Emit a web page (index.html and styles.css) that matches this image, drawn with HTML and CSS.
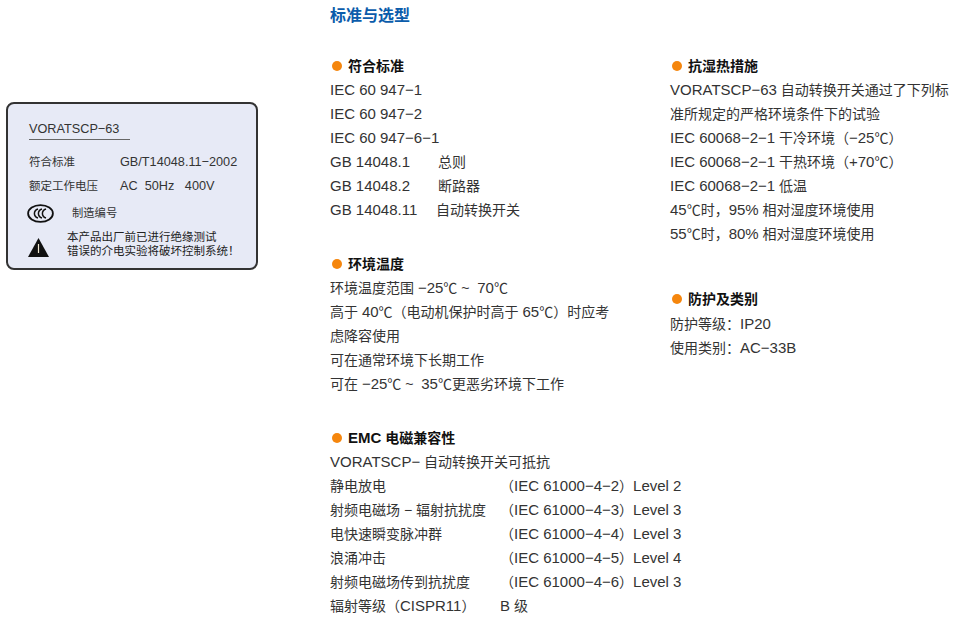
FILE: index.html
```html
<!DOCTYPE html>
<html lang="zh">
<head>
<meta charset="utf-8">
<title>标准与选型</title>
<link rel="stylesheet" href="styles.css">
</head>
<body>
<div class="page">
  <aside class="label">
    <div class="model">VORATSCP−63</div>
    <div class="spec"><span class="spec-name">符合标准</span><span class="lat">GB/T14048.11−2002</span></div>
    <div class="spec"><span class="spec-name">额定工作电压</span><span class="lat">AC&nbsp; 50Hz &nbsp;&nbsp;400V</span></div>
    <div class="serial">
      <svg class="ccc" viewBox="0 0 27 19" aria-hidden="true">
        <ellipse cx="13.5" cy="9.5" rx="12.4" ry="8.4" fill="none" stroke="#111" stroke-width="1.8"/>
        <path d="M11 5a5.5 4.8 0 0 0 0 9M15 5a5.5 4.8 0 0 0 0 9M19 5a5.5 4.8 0 0 0 0 9" fill="none" stroke="#111" stroke-width="1.5"/>
      </svg>
      <span>制造编号</span>
    </div>
    <div class="warning">
      <svg class="triangle" viewBox="0 0 21 19" aria-hidden="true">
        <path d="M10.5 0L21 19H0Z" fill="#111"/>
        <path d="M10.5 6v9" stroke="#f2e9d2" stroke-width="1.2"/>
      </svg>
      <p>本产品出厂前已进行绝缘测试<br>错误的介电实验将破坏控制系统！</p>
    </div>
  </aside>

  <main class="main">
    <div class="col-mid">
      <h1 class="title">标准与选型</h1>
      <section class="sec">
        <h2 class="head">符合标准</h2>
        <p class="en">IEC 60 947−1</p>
        <p class="en">IEC 60 947−2</p>
        <p class="en">IEC 60 947−6−1</p>
        <p><span class="std en">GB 14048.1</span>总则</p>
        <p><span class="std en">GB 14048.2</span>断路器</p>
        <p><span class="std std-long en">GB 14048.11</span>自动转换开关</p>
      </section>
      <section class="sec">
        <h2 class="head">环境温度</h2>
        <p>环境温度范围 <span class="en">−25</span>℃ ~ &nbsp;<span class="en">70</span>℃</p>
        <p>高于 <span class="en">40</span>℃（电动机保护时高于 <span class="en">65</span>℃）时应考</p>
        <p>虑降容使用</p>
        <p>可在通常环境下长期工作</p>
        <p>可在 <span class="en">−25</span>℃ ~ &nbsp;<span class="en">35</span>℃更恶劣环境下工作</p>
      </section>
      <section class="sec">
        <h2 class="head"><span class="en">EMC</span>&nbsp;电磁兼容性</h2>
        <p><span class="en">VORATSCP−</span> 自动转换开关可抵抗</p>
        <p><span class="emc">静电放电</span>（<span class="en">IEC 61000−4−2</span>）<span class="en">Level 2</span></p>
        <p><span class="emc">射频电磁场 − 辐射抗扰度</span>（<span class="en">IEC 61000−4−3</span>）<span class="en">Level 3</span></p>
        <p><span class="emc">电快速瞬变脉冲群</span>（<span class="en">IEC 61000−4−4</span>）<span class="en">Level 3</span></p>
        <p><span class="emc">浪涌冲击</span>（<span class="en">IEC 61000−4−5</span>）<span class="en">Level 4</span></p>
        <p><span class="emc">射频电磁场传到抗扰度</span>（<span class="en">IEC 61000−4−6</span>）<span class="en">Level 3</span></p>
        <p><span class="emc">辐射等级（<span class="en">CISPR11</span>）</span><span class="en">B</span> 级</p>
      </section>
    </div>
    <div class="col-right">
      <section class="sec">
        <h2 class="head">抗湿热措施</h2>
        <p><span class="en">VORATSCP−63</span> 自动转换开关通过了下列标</p>
        <p>准所规定的严格环境条件下的试验</p>
        <p><span class="en">IEC 60068−2−1</span> 干冷环境（<span class="en">−25</span>℃）</p>
        <p><span class="en">IEC 60068−2−1</span> 干热环境（<span class="en">+70</span>℃）</p>
        <p><span class="en">IEC 60068−2−1</span> 低温</p>
        <p><span class="en">45</span>℃时，<span class="en">95%</span> 相对湿度环境使用</p>
        <p><span class="en">55</span>℃时，<span class="en">80%</span> 相对湿度环境使用</p>
      </section>
      <section class="sec sec-protect">
        <h2 class="head head-tight">防护及类别</h2>
        <p>防护等级：<span class="en">IP20</span></p>
        <p>使用类别：<span class="en">AC−33B</span></p>
      </section>
    </div>
  </main>
</div>
</body>
</html>
```
FILE: styles.css
```css
* { box-sizing: border-box; }
html, body { margin: 0; padding: 0; background: #fff; }
body {
  font-family: "Liberation Sans", "Noto Sans CJK SC", sans-serif;
  font-size: 14px;
  line-height: 24px;
  color: #333;
}
p, h1, h2 { margin: 0; }
.page { display: flex; align-items: flex-start; padding: 3px 0 0 6px; height: 626px; overflow: hidden; }
.en { font-size: 15px; }
.lat { font-size: 12.7px; }

/* nameplate */
.label {
  width: 252px;
  height: 168px;
  margin: 99px 72px 0 0;
  padding: 15px 0 0 21px;
  background: #e7eaf6;
  border: 2px solid #333;
  border-radius: 8px;
  font-size: 11.5px;
  line-height: 24px;
  color: #333;
  flex: none;
}
.model { width: 101px; height: 21px; font-size: 12.7px; line-height: 20px; border-bottom: 1.5px solid #666; margin-bottom: 10px; white-space: nowrap; }
.spec { display: flex; white-space: nowrap; }
.spec-name { width: 91px; flex: none; }
.serial { display: flex; align-items: center; margin: 5px 0 0 -2px; height: 20px; }
.ccc { width: 27px; height: 19px; flex: none; margin-right: 18px; }
.serial span { font-size: 11.3px; }
.warning { display: flex; align-items: flex-end; margin: 7px 0 0 -1px; }
.triangle { width: 21px; height: 19px; flex: none; margin: 0 18px 1px 0; }
.warning p { line-height: 14px; color: #222; white-space: nowrap; }

/* columns */
.main { display: flex; flex: none; }
.col-mid { width: 340px; flex: none; }
.col-right { width: 288px; flex: none; padding-top: 51px; }
.title { font-size: 16px; font-weight: bold; line-height: 24px; color: #0b5cab; padding-top: 1px; height: 25px; margin-bottom: 26px; }
.sec { margin-bottom: 30px; white-space: nowrap; }
.sec-protect { margin-top: 41px; }
.head { display: flex; align-items: center; font-size: 14px; font-weight: bold; line-height: 24px; color: #111; }
.head-tight { margin-bottom: 1px; }
.head::before { content: ""; width: 10px; height: 10px; margin: 0 6px 0 2px; border-radius: 50%; background: #f5860d; flex: none; }
.std { display: inline-block; width: 108px; }
.std-long { width: 106px; }
.emc { display: inline-block; width: 170px; }
```
